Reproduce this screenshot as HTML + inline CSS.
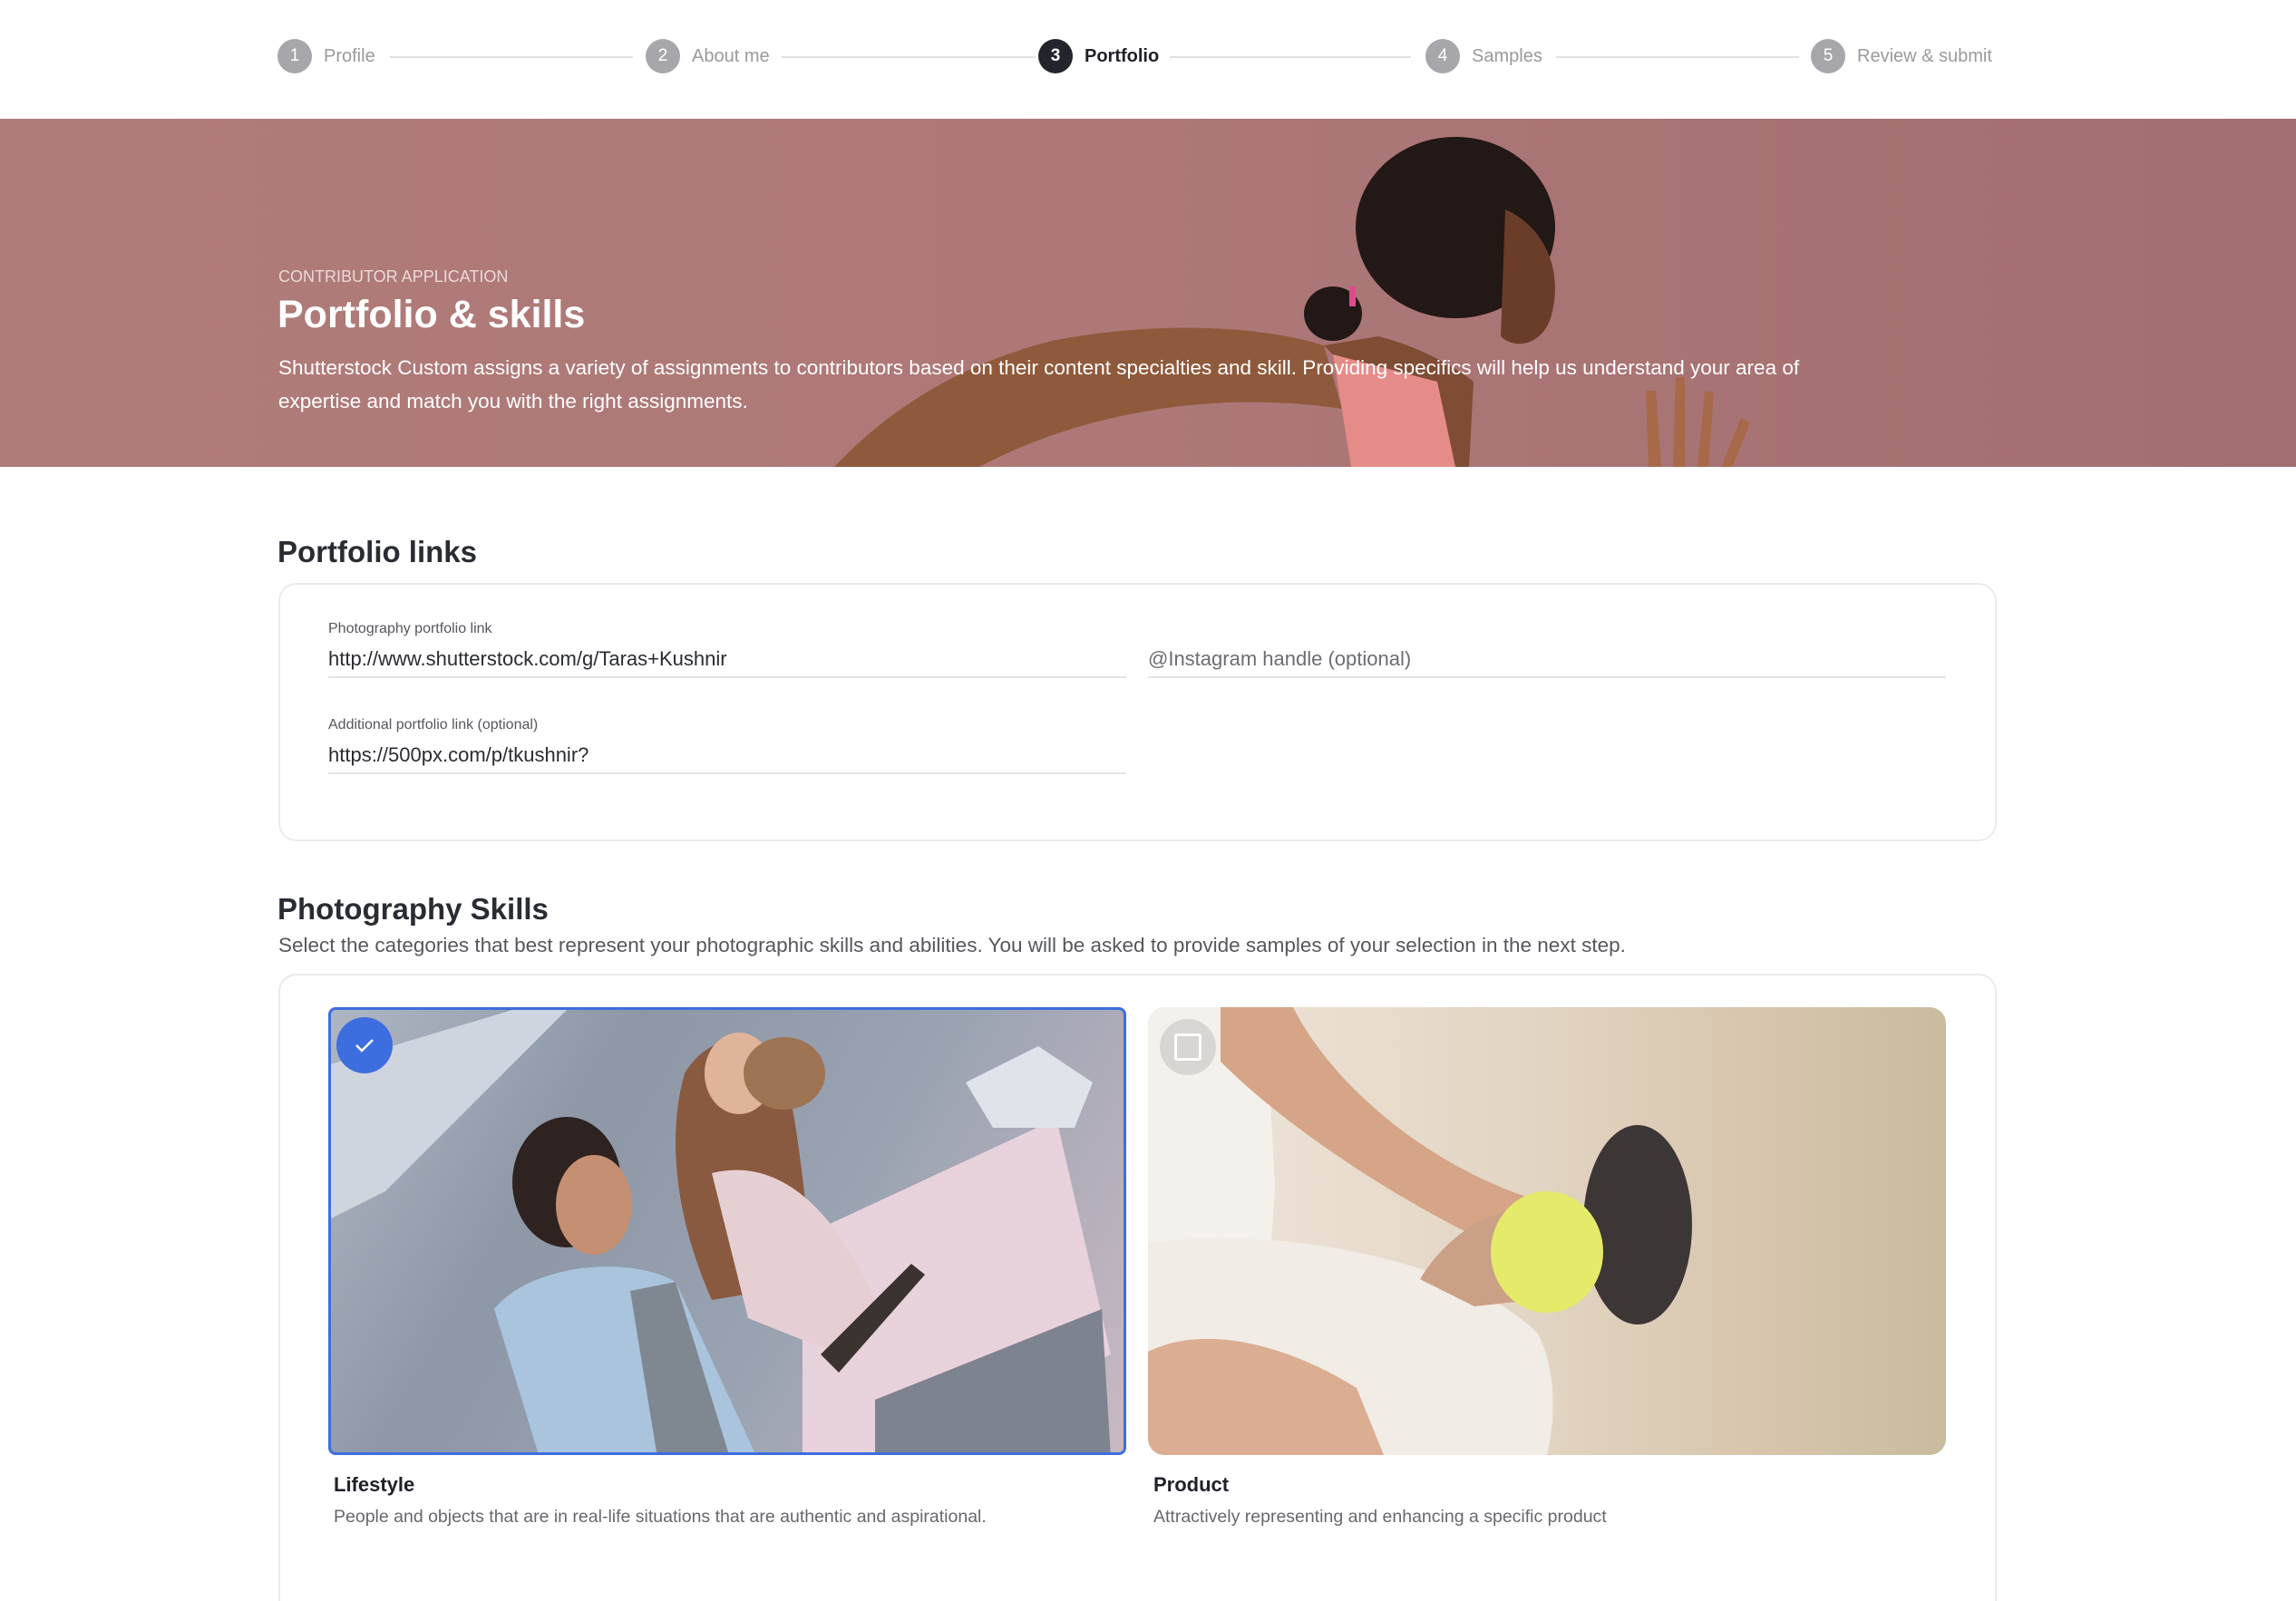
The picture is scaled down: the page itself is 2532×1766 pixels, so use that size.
<!DOCTYPE html>
<html><head><meta charset="utf-8">
<style>
*{margin:0;padding:0;box-sizing:border-box}
html,body{width:2532px;height:1766px;overflow:hidden}
body{background:#fff;font-family:"Liberation Sans",Arial,sans-serif;position:relative;color:#2a2c33}
.a{position:absolute}
.step{position:absolute;top:43px;height:38px;display:flex;align-items:center;font-size:20px;color:#9a9a9e}
.c{width:38px;height:38px;border-radius:50%;background:#a7a7ab;color:#fff;display:flex;align-items:center;justify-content:center;font-size:19px;margin-right:13px}
.line{position:absolute;top:62px;height:2px;background:#e1e1e3}
.lbl{font-size:16px;color:#55575c}
.val{font-size:22px;color:#2a2c33}
.ul{height:2px;background:#e3e3e5}
</style></head><body>
<div class="step" style="left:306px"><div class="c">1</div>Profile</div>
<div class="line" style="left:430px;width:268px"></div>
<div class="step" style="left:712px"><div class="c">2</div>About me</div>
<div class="line" style="left:862px;width:280px"></div>
<div class="step" style="left:1145px;color:#1f2128;font-weight:bold"><div class="c" style="background:#23252d">3</div>Portfolio</div>
<div class="line" style="left:1290px;width:266px"></div>
<div class="step" style="left:1572px"><div class="c">4</div>Samples</div>
<div class="line" style="left:1716px;width:268px"></div>
<div class="step" style="left:1997px"><div class="c">5</div>Review &amp; submit</div>

<div class="a" style="left:0;top:131px;width:2532px;height:384px;background:linear-gradient(90deg,#b07c79 0%,#ad7877 50%,#a36e70 100%);overflow:hidden">
<svg width="2532" height="384" viewBox="0 0 2532 384" style="position:absolute;left:0;top:0">
<path d="M920 384 C980 320 1060 270 1160 245 C1260 225 1380 225 1460 250 L1480 320 C1350 300 1200 320 1080 384Z" fill="#8f5a3c"/>
<path d="M1460 250 C1500 290 1530 330 1545 384 L1620 384 L1625 290 C1600 270 1560 250 1520 240Z" fill="#7f4c34"/>
<path d="M1470 260 L1490 384 L1605 384 L1585 290Z" fill="#e68c88"/>
<ellipse cx="1605" cy="120" rx="110" ry="100" fill="#221816"/>
<path d="M1660 100 C1705 120 1725 170 1710 220 C1700 250 1670 255 1655 240Z" fill="#6a3d29"/>
<ellipse cx="1470" cy="215" rx="32" ry="30" fill="#221816"/>
<rect x="1488" y="185" width="7" height="22" fill="#e04a8a"/>
<path d="M1818 384 L1815 300 L1826 300 L1832 384Z M1845 384 L1848 285 L1858 285 L1858 384Z M1872 384 L1880 300 L1890 302 L1884 384Z M1898 384 L1920 330 L1930 336 L1910 384Z" fill="#a8694a"/>
</svg>
<div class="a" style="left:307px;top:164px;font-size:18px;color:#ecd9d7">CONTRIBUTOR APPLICATION</div>
<div class="a" style="left:306px;top:192px;font-size:43px;font-weight:bold;color:#fff">Portfolio &amp; skills</div>
<div class="a" style="left:307px;top:256px;width:1720px;font-size:22.5px;line-height:37px;color:#fff">Shutterstock Custom assigns a variety of assignments to contributors based on their content specialties and skill. Providing specifics will help us understand your area of expertise and match you with the right assignments.</div>
</div>

<div class="a" style="left:306px;top:590px;font-size:33px;font-weight:bold">Portfolio links</div>
<div class="a" style="left:307px;top:643px;width:1895px;height:285px;border:2px solid #ebebed;border-radius:20px"></div>
<div class="a lbl" style="left:362px;top:685px">Photography portfolio link</div>
<div class="a val" style="left:362px;top:714px">http://www.shutterstock.com/g/Taras+Kushnir</div>
<div class="a ul" style="left:362px;top:746px;width:880px"></div>
<div class="a val" style="left:1266px;top:714px;color:#6b6d72">@Instagram handle (optional)</div>
<div class="a ul" style="left:1266px;top:746px;width:880px"></div>
<div class="a lbl" style="left:362px;top:791px">Additional portfolio link (optional)</div>
<div class="a val" style="left:362px;top:820px">https://500px.com/p/tkushnir?</div>
<div class="a ul" style="left:362px;top:852px;width:880px"></div>

<div class="a" style="left:306px;top:984px;font-size:33px;font-weight:bold">Photography Skills</div>
<div class="a" style="left:307px;top:1030px;font-size:22.5px;color:#55575c">Select the categories that best represent your photographic skills and abilities. You will be asked to provide samples of your selection in the next step.</div>
<div class="a" style="left:307px;top:1074px;width:1895px;height:760px;border:2px solid #ebebed;border-radius:20px"></div>

<div class="a" style="left:362px;top:1111px;width:880px;height:494px;border:3px solid #3d6ee0;border-radius:8px;overflow:hidden;background:linear-gradient(120deg,#aeb6c4 0%,#8e97a6 30%,#9aa3b2 60%,#c9b9c2 100%)">
<svg width="880" height="494" viewBox="0 0 880 494" style="position:absolute;left:0;top:0">
<path d="M0 60 L200 0 L260 0 L60 200 L0 230Z" fill="#cfd5de"/>
<path d="M520 250 L800 120 L860 380 L640 494 L520 494Z" fill="#e8d2dc"/>
<path d="M600 430 L850 330 L860 494 L600 494Z" fill="#7d838f"/>
<path d="M390 70 C420 20 480 20 500 70 C520 140 520 230 540 300 L420 320 C380 230 370 140 390 70Z" fill="#8a5a40"/>
<path d="M420 180 C500 160 560 230 600 320 L560 380 L460 340Z" fill="#e6cfd3"/>
<ellipse cx="450" cy="70" rx="38" ry="45" fill="#e0b49a"/>
<path d="M180 330 C220 280 330 270 380 300 L470 494 L230 494Z" fill="#a9c4dc"/>
<path d="M330 310 L380 300 L440 494 L360 494Z" fill="#7f8790"/>
<ellipse cx="260" cy="190" rx="60" ry="72" fill="#2e2320"/>
<ellipse cx="290" cy="215" rx="42" ry="55" fill="#c58f72"/>
<path d="M540 380 L640 280 L655 292 L560 400Z" fill="#3a3330"/>
<path d="M700 80 L780 40 L840 80 L820 130 L730 130Z" fill="#dfe3ea"/>
<ellipse cx="500" cy="70" rx="45" ry="40" fill="#9e7452"/>
</svg>
<div class="a" style="left:6px;top:8px;width:62px;height:62px;border-radius:50%;background:#3d6ee0;display:flex;align-items:center;justify-content:center">
<svg width="22" height="18" viewBox="0 0 22 18"><path d="M2 9 L8 15 L20 3" stroke="#fff" stroke-width="2.5" fill="none"/></svg></div>
</div>
<div class="a" style="left:368px;top:1625px;font-size:22px;font-weight:bold;color:#1f2128">Lifestyle</div>
<div class="a" style="left:368px;top:1662px;font-size:19.5px;color:#66686d">People and objects that are in real-life situations that are authentic and aspirational.</div>

<div class="a" style="left:1266px;top:1111px;width:880px;height:494px;border-radius:18px;overflow:hidden;background:linear-gradient(90deg,#efe6dc 0%,#e2d4c2 50%,#d8c6ae 75%,#c9bc9e 100%)">
<svg width="880" height="494" viewBox="0 0 880 494" style="position:absolute;left:0;top:0">
<path d="M0 0 L130 0 L140 200 L120 494 L0 494Z" fill="#f4f1ed"/>
<path d="M0 260 C150 240 350 280 430 360 C460 420 440 494 440 494 L0 494Z" fill="#f1ece6"/>
<path d="M80 0 L160 0 C200 80 300 170 420 210 L470 250 L420 280 C300 230 160 140 80 60Z" fill="#d6a587"/>
<path d="M300 300 C330 250 380 220 430 220 L450 320 L360 330Z" fill="#caa087"/>
<ellipse cx="540" cy="240" rx="60" ry="110" fill="#3c3636"/>
<ellipse cx="440" cy="270" rx="62" ry="67" fill="#e5ea6a"/>
<path d="M0 380 C60 350 150 370 230 420 L260 494 L0 494Z" fill="#dbae93"/>
</svg>
<div class="a" style="left:13px;top:13px;width:62px;height:62px;border-radius:50%;background:#d6d3d0;opacity:.9;display:flex;align-items:center;justify-content:center"><div style="width:30px;height:30px;border:3px solid #fff;border-radius:3px"></div></div>
</div>
<div class="a" style="left:1272px;top:1625px;font-size:22px;font-weight:bold;color:#1f2128">Product</div>
<div class="a" style="left:1272px;top:1662px;font-size:19.5px;color:#66686d">Attractively representing and enhancing a specific product</div>
</body></html>
